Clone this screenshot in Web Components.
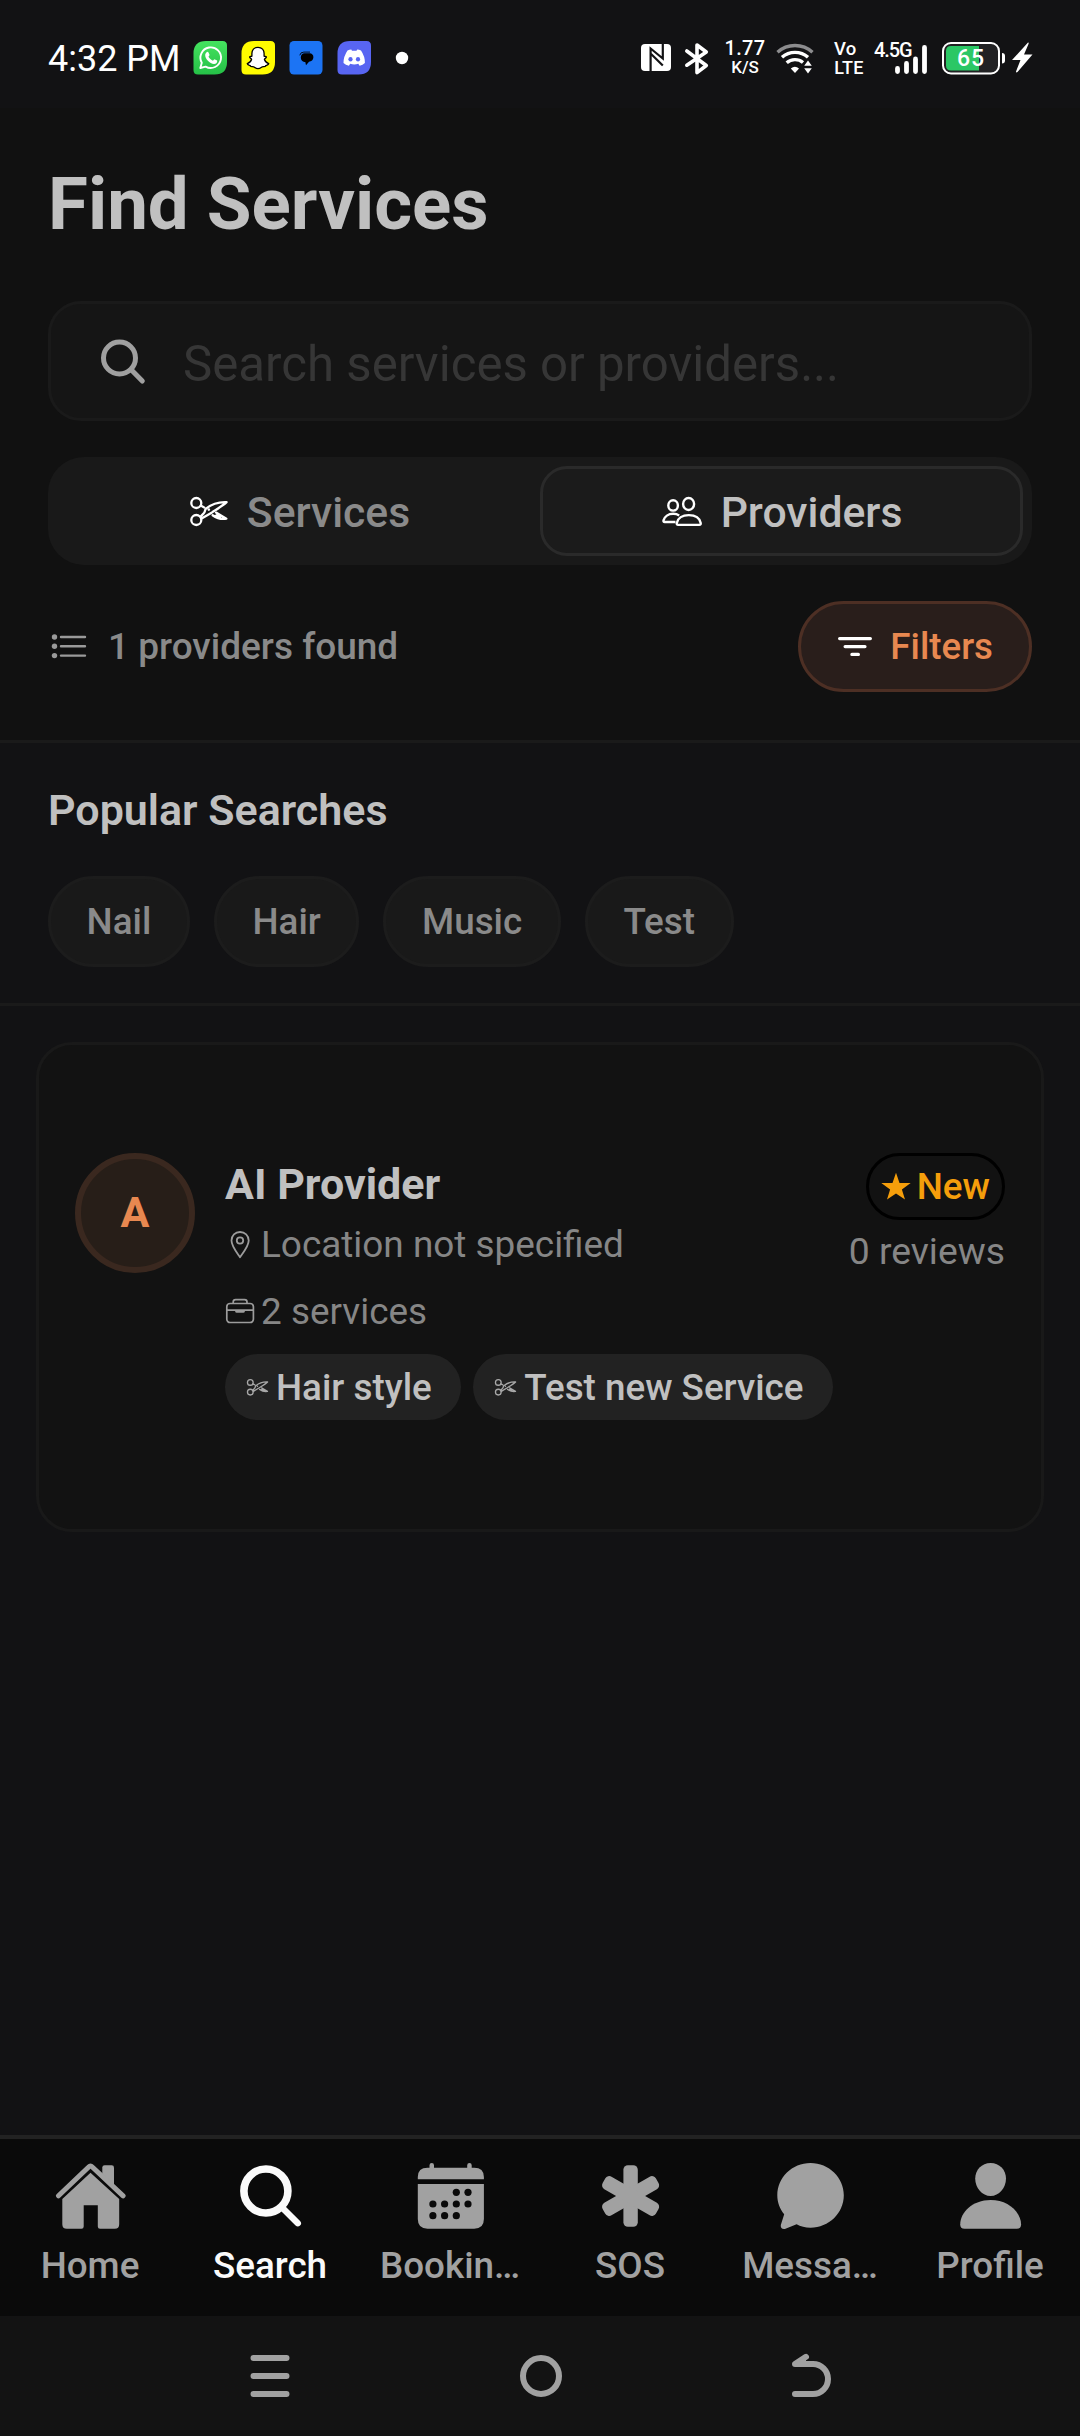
<!DOCTYPE html>
<html lang="en">
<head>
<meta charset="utf-8">
<title>Find Services</title>
<style>
html,body{margin:0;padding:0;background:#121214}
body{width:1080px;height:2436px;overflow:hidden;font-family:Roboto,"Noto Sans",sans-serif;color:#c0c0c0;display:flex;flex-direction:column}
find-screen{flex:1}
</style>
</head>
<body>
<status-bar></status-bar>
<find-screen></find-screen>
<tab-bar>
  <tab-item icon="home">Home</tab-item>
  <tab-item icon="searchTab" active>Search</tab-item>
  <tab-item icon="calendar">Bookin…</tab-item>
  <tab-item icon="sos">SOS</tab-item>
  <tab-item icon="message">Messa…</tab-item>
  <tab-item icon="profile">Profile</tab-item>
</tab-bar>
<system-nav></system-nav>
<script>
const SCISSORS = '<g fill="none" stroke="currentColor" stroke-width="2.3" stroke-linejoin="round" stroke-linecap="round"><circle cx="9.3" cy="13" r="5"/><circle cx="9.3" cy="30" r="5"/><path d="M13.7 15.6 17.2 17.4M13.6 26.6 17 23C18.4 21.5 17.6 20 19 18.7 24 14.7 32 11.8 39.6 12.2 36 15.6 31 18.6 25 22.4L14.6 28.6"/><path d="M29 22.6 39.4 28.7C34 29.6 29.500 28 25.600 25.200M29.500 25.200 33 27"/></g><circle cx="21.800" cy="19.600" r="1.300" fill="currentColor"/>';
const ICONS = {
  scissors: [42,42,SCISSORS],
  people: [42,42,'<g fill="none" stroke="currentColor" stroke-width="2.4" stroke-linejoin="round"><ellipse cx="27.6" cy="14" rx="5.5" ry="6"/><ellipse cx="12.1" cy="15.4" rx="4.8" ry="5.2"/><path d="M17.2 34.9C16 34.9 15.6 34 15.8 32.9 16.8 28.2 21.3 25.1 27.8 25.1S38.7 28.2 39.7 32.9C39.9 34 39.5 34.9 38.3 34.9Z"/><path d="M14.5 32H3.7C2.6 32 2.3 31.3 2.5 30.4 3.5 26.5 7.3 23.8 12.2 23.8 14.7 23.8 16.6 24.4 18.2 25.4"/></g>'],
  list: [42,42,'<g fill="currentColor"><circle cx="6.5" cy="12" r="2.7"/><circle cx="6.5" cy="21.3" r="2.7"/><circle cx="6.5" cy="30.6" r="2.7"/></g><path d="M13 12H37M13 21.3H37M13 30.6H37" stroke="currentColor" stroke-width="2.4" stroke-linecap="round"/>'],
  filter: [36,36,'<path d="M2.6 10.6H33.4M8.1 18.6H28M14.9 26.4H21.4" stroke="currentColor" stroke-width="3.2" stroke-linecap="round"/>'],
  search: [54,54,'<g fill="none" stroke="currentColor" stroke-width="5" stroke-linecap="round"><circle cx="23.5" cy="24" r="16"/><path d="M35.5 36 46.3 47"/></g>'],
  pin: [30,30,'<g fill="none" stroke="currentColor" stroke-width="1.8" stroke-linejoin="round"><path d="M15 27.2C12.5 23.5 6.5 16.5 6.5 10.6 6.5 5.6 10.2 2 15 2S23.7 5.6 23.7 10.6C23.7 16.5 17.5 23.5 15 27.2Z"/><circle cx="15" cy="10.5" r="3.2"/></g>'],
  briefcase: [30,30,'<g fill="none" stroke="currentColor" stroke-width="1.7" stroke-linejoin="round"><rect x="1.8" y="6.5" width="26.6" height="19" rx="3.3"/><path d="M8.2 6.5V5C8.2 3.4 9 2.6 10.6 2.6H19.6C21.2 2.6 22 3.4 22 5V6.5M1.8 13.2H28.4"/></g><path d="M10.2 13.2H19.8V14.2Q19.8 15.7 18.2 15.7H11.8Q10.2 15.7 10.2 14.2Z" fill="currentColor"/>'],
  star: [30,30,'<path d="M15 .8 18.5 11H29.7L20.9 17.4 24 27.6 15 21.5 6 27.6 9.1 17.4 .3 11H11.5Z" fill="currentColor"/>'],
  home: [72,72,'<g fill="currentColor"><path d="M36.5 12.7 65.2 38.9V64.2Q65.2 68.7 60.7 68.7H46Q43.8 68.7 43.8 66.5V45.3H29.7V66.5Q29.7 68.7 27.5 68.7H12.8Q8.3 68.7 8.3 64.2V38.9Z"/><path d="M48.3 14V7.6Q48.3 5.3 50.6 5.3H57.7Q60 5.3 60 7.6V26Z"/></g><path d="M4.5 35.8 34.7 7Q36.5 5.2 38.3 7L69.1 35.8" fill="none" stroke="currentColor" stroke-width="5" stroke-linecap="round"/>'],
  searchTab: [72,72,'<g fill="none" stroke="currentColor" stroke-linecap="round"><circle cx="31.9" cy="31" r="22" stroke-width="7.6"/><path d="M48 47.5 63.8 63.2" stroke-width="6.4"/></g>'],
  calendar: [72,72,'<path fill="currentColor" fill-rule="evenodd" d="M3.8 19.3V17Q3.8 7.7 13.5 7.7H15.5V5.2a2.25 2.25 0 0 1 4.5 0V7.7H53.2V5.2a2.25 2.25 0 0 1 4.5 0V7.7H60.2Q69.9 7.7 69.9 17V19.3ZM3.8 24H69.9V59Q69.9 68.7 60.2 68.7H13.5Q3.8 68.7 3.8 59Z"/><g fill="#0a0a0a"><circle cx="42.3" cy="32.3" r="3.6"/><circle cx="54" cy="32.3" r="3.6"/><circle cx="18.9" cy="44" r="3.6"/><circle cx="30.6" cy="44" r="3.6"/><circle cx="42.3" cy="44" r="3.6"/><circle cx="54" cy="44" r="3.6"/><circle cx="18.9" cy="55.7" r="3.6"/><circle cx="30.6" cy="55.7" r="3.6"/><circle cx="42.3" cy="55.7" r="3.6"/></g>'],
  sos: [72,72,'<g fill="currentColor"><rect x="29.4" y="5.3" width="14.4" height="61.4" rx="4.5"/><rect x="29.4" y="5.3" width="14.4" height="61.4" rx="4.5" transform="rotate(60 36.6 36)"/><rect x="29.4" y="5.3" width="14.4" height="61.4" rx="4.5" transform="rotate(-60 36.6 36)"/></g>'],
  message: [72,72,'<path fill="currentColor" d="M36.5 3C55 3 69.8 17.5 69.8 35.3S55 67.7 36.5 67.7C31.2 67.7 26.5 66.5 22.6 64.3L11.5 68.8C8.6 69.8 6.2 67.8 6.8 65L10.2 54.3C5.8 49 3.3 42.5 3.3 35.3 3.3 17.5 18 3 36.5 3Z"/>'],
  profile: [72,72,'<g fill="currentColor"><path d="M36.6 3C45.5 3 52 10 52 18.5 52 28 45 36 36.6 36S21.2 28 21.2 18.5C21.2 10 27.7 3 36.6 3Z"/><path d="M10.5 68.7Q6.2 68.7 6.2 64.5C6.2 52.5 18.5 40 36.6 40S67.1 52.5 67.1 64.5Q67.1 68.7 62.8 68.7Z"/></g>'],
  menu: [60,60,'<path d="M13.5 12H46.5M13.5 30H46.5M13.5 48H46.5" stroke="currentColor" stroke-width="6" stroke-linecap="round"/>'],
  circle: [60,60,'<circle cx="30" cy="30" r="18" fill="none" stroke="currentColor" stroke-width="6"/>'],
  back: [60,60,'<g fill="none" stroke="currentColor" stroke-width="6" stroke-linecap="round" stroke-linejoin="round"><path d="M14 48H32a15 15 0 0 0 0-30H14L25 10.8"/></g><path d="M14 18 25 10.8V18Z" fill="currentColor"/>'],
  whatsapp: [34,48,'<defs><linearGradient id="w" x1="0" y1="0" x2="0" y2="1"><stop offset="0" stop-color="#45e35f"/><stop offset="1" stop-color="#25c047"/></linearGradient></defs><path d="M13 7H29.5Q34 7 34 11.5V28Q34 40.5 21.5 40.5H5Q.5 40.5.5 36V19.5Q.5 7 13 7Z" fill="url(#w)"/><path d="M7.3 34 8.8 28.8A10.3 10.3 0 1 1 12.6 32.6Z" fill="none" stroke="#fff" stroke-width="1.9" stroke-linejoin="round"/><path d="M13.4 18.4C14.2 17.6 15 17.7 15.5 18.6L16.5 20.8C16.7 21.5 15.8 22.2 15.5 22.8 16.5 24.7 18 25.9 20 26.7 20.6 26.3 21.2 25.1 21.9 25.4L24.2 26.6C24.6 28.5 23 30.1 21 30 16.8 29.5 12 24.9 12.2 21 12.2 20 12.7 19 13.4 18.4Z" fill="#fff"/>'],
  snap: [34,48,'<path d="M13 7H29.5Q34 7 34 11.5V28Q34 40.5 21.5 40.5H5Q.5 40.5.5 36V19.5Q.5 7 13 7Z" fill="#fffc00"/><path d="M17 13.3C21 13.3 23.2 16 23.1 19.8V22.2C24 22.6 25 21.9 25.4 23 25.5 24.1 23.6 24.5 23.4 25.3 24.2 28 25.6 29 27.7 29.7 27.5 31.3 25.3 31.2 24.6 31.8 24.4 33.2 22.6 32.4 21.3 32.8 19.9 33.7 18.8 34.7 17 34.7S14.1 33.7 12.7 32.8C11.4 32.4 9.6 33.2 9.4 31.8 8.7 31.2 6.5 31.3 6.3 29.7 8.4 29 9.8 28 10.6 25.3 10.4 24.5 8.5 24.1 8.6 23 9 21.9 10 22.6 10.9 22.2V19.8C10.8 16 13 13.3 17 13.3Z" fill="#fff" stroke="#000" stroke-width="1.3"/>'],
  chat: [34,48,'<rect x=".5" y="7" width="33" height="33.5" rx="4.5" fill="#1c74f4"/><path d="M15.5 19.3H20.5C23 19.3 24.4 21 24.4 23.2 24.4 25.8 22.3 27.5 20 27.8L17 31.2 16.3 27.9H15.5C13.3 27.9 11.8 25.9 11.8 23.5S13.3 19.3 15.5 19.3Z" fill="#000"/><path d="M10.8 21.3Q11.3 18.1 14.8 18.1H21" fill="none" stroke="#000" stroke-width=".9"/>'],
  discord: [34,48,'<path d="M13 7H29.5Q34 7 34 11.5V28Q34 40.5 21.5 40.5H5Q.5 40.5.5 36V19.5Q.5 7 13 7Z" fill="#5865f2"/><path d="M10.5 16.6Q12.5 15.7 14.3 15.6L15 16.8Q17.2 16.5 19.5 16.8L20.2 15.6Q22 15.7 24 16.6 28 22.5 27.9 29 25.8 31 22.6 31.7L21.3 29.8Q17.2 31 13.2 29.8L11.9 31.7Q8.7 31 6.5 29 6.5 22.5 10.5 16.6Z" fill="#fff"/><ellipse cx="13.5" cy="25.3" rx="2.1" ry="2.3" fill="#5865f2"/><ellipse cx="21" cy="25.3" rx="2.1" ry="2.3" fill="#5865f2"/>'],
  dot: [14,48,'<circle cx="7" cy="24" r="6.2" fill="#fff"/>'],
  nfc: [31,48,'<rect x="1" y="10" width="30" height="27" rx="4" fill="#fff"/><path d="M10.6 37V14.5L22.8 24.5V10M10.6 19.5 22.8 31.5" fill="none" stroke="#121214" stroke-width="2.2"/>'],
  bluetooth: [26,48,'<path d="M2.8 17 22.3 31.5 13 38.6V11L22.3 18 2.8 31.2" fill="none" stroke="#fff" stroke-width="3.6" stroke-linecap="round" stroke-linejoin="round"/>'],
  wifi: [38,48,'<g fill="none" stroke-width="3.4"><path d="M1.5 18.2A26 26 0 0 1 36.5 18.2" stroke="#8c8c8e"/><path d="M6 23.3A19.5 19.5 0 0 1 32 23.3M10.7 28.8A12.5 12.5 0 0 1 27 28.5" stroke="#fff"/></g><path d="M14.8 34.5Q19 31.2 23 34.5L19 39Z" fill="#fff"/><path d="M32 26.5 35.8 31.8H28.2ZM32 39.5 35.8 34.2H28.2Z" fill="#fff"/>'],
  signal: [54,48,'<text x="0" y="23" font-size="20" font-weight="500" fill="#fff" textLength="38.5" font-family="Roboto,sans-serif">4.5G</text><path d="M23.5 34.5V37.5M32.5 29.5V37.5M41.5 25V37.5M50.5 13.5V37.5" stroke="#fff" stroke-width="4.8" stroke-linecap="round"/>'],
  battery: [64,48,'<rect x="1" y="9" width="56" height="30.5" rx="8" fill="#222224" stroke="#fff" stroke-width="2"/><path d="M9 12H37V36.5H9Q4 36.5 4 31.5V17Q4 12 9 12Z" fill="#2bc765"/><path d="M60 19Q63 19 63 22V26.5Q63 29.5 60 29.5Z" fill="#fff"/><text x="15" y="32.3" font-size="23" font-weight="500" fill="#fff" textLength="27" font-family="Roboto,sans-serif">65</text>'],
  bolt: [22,48,'<path d="M17 8.5 1 26H9.5L5 37.5Q5 39 6.5 38L21.5 20.5H13L17.5 10Q18 8 17 8.5Z" fill="#fff"/>']
};

function define(name, html, init) {
  const t = document.createElement('template');
  t.innerHTML = html;
  customElements.define(name, class extends HTMLElement {
    constructor() {
      super();
      this.attachShadow({mode: 'open'}).append(t.content.cloneNode(true));
    }
    connectedCallback() { if (init) init(this, this.shadowRoot); }
  });
}

// Puts the icon named by the host's icon attribute in front of its label.
function leadingIcon(el, root) {
  const icon = document.createElement('ui-icon');
  icon.setAttribute('name', el.getAttribute('icon'));
  root.querySelector('span').before(icon);
}

define('ui-icon', '<style>:host{display:block;flex:none;line-height:0}svg{display:block}</style>', (el, root) => {
  const [w, h, body] = ICONS[el.getAttribute('name')];
  const s = Number(el.getAttribute('scale') || 1);
  const box = document.createElement('template');
  box.innerHTML = `<svg width="${w * s}" height="${h * s}" viewBox="0 0 ${w} ${h}">${body}</svg>`;
  root.append(box.content);
});

define('status-stack', `<style>
:host{display:flex;flex-direction:column;align-items:center;color:#fff;font-weight:500;white-space:nowrap}
</style><slot></slot>`);

define('status-bar', `<style>
:host{display:flex;justify-content:space-between;align-items:flex-start;height:108px;box-sizing:border-box;padding:34px 47px 0 48px;background:#121214;color:#fff}
.side{display:flex;height:48px}
.time{font-size:36px;line-height:51px;width:131px;margin-right:14px;white-space:nowrap}
.apps{display:flex;gap:14px}
.a1{font-size:20px;line-height:20px;padding-top:4px;letter-spacing:.3px}
.a2{font-size:17px;line-height:18px}
.b1{font-size:18.5px;line-height:18px;padding-top:5.5px;align-self:flex-start;letter-spacing:.3px}
.b2{font-size:18px;line-height:19px;letter-spacing:.3px}
</style>
<div class="side"><span class="time">4:32 PM</span><div class="apps"><ui-icon name="whatsapp"></ui-icon><ui-icon name="snap"></ui-icon><ui-icon name="chat"></ui-icon><ui-icon name="discord"></ui-icon></div><ui-icon name="dot" style="margin-left:24px"></ui-icon></div>
<div class="side"><ui-icon name="nfc"></ui-icon><ui-icon name="bluetooth" style="margin-left:13px"></ui-icon>
<status-stack style="width:40px;margin-left:15px"><span class="a1">1.77</span><span class="a2">K/S</span></status-stack>
<ui-icon name="wifi" style="margin-left:11px"></ui-icon>
<status-stack style="width:30px;margin-left:20px"><span class="b1">Vo</span><span class="b2">LTE</span></status-stack>
<ui-icon name="signal" style="margin-left:10px"></ui-icon><ui-icon name="battery" style="margin-left:14px"></ui-icon><ui-icon name="bolt" style="margin-left:5px"></ui-icon></div>`);

define('search-field', `<style>
:host{display:flex;align-items:center;box-sizing:border-box;height:120px;border:3px solid #1a1a1a;border-radius:33px;background:#151515;padding:0 30px 0 45px;color:#a0a0a0}
span{margin-left:33px;font-size:49.2px;line-height:58px;padding-top:5px;color:#363636;white-space:nowrap}
</style><ui-icon name="search"></ui-icon><span><slot></slot></span>`);

define('segment-option', `<style>
:host{display:flex;flex:1;align-items:center;justify-content:center;gap:18px;box-sizing:border-box;border:3px solid transparent;border-radius:27px;color:#8a8a8a;font-size:42.7px;font-weight:500}
:host([active]){background:#1b1b1b;border-color:#2a2a2a;color:#c0c0c0}
ui-icon{color:#fff}
span{line-height:50px;padding-top:1px}
</style><span><slot></slot></span>`, leadingIcon);

define('segment-control', `<style>
:host{display:flex;box-sizing:border-box;height:108px;padding:9px;border-radius:36px;background:#191919}
</style><slot></slot>`);

define('filter-button', `<style>
:host{display:flex;align-items:center;gap:17px;box-sizing:border-box;height:90.6px;padding:0 36px;border:3px solid #4d2f24;border-radius:46px;background:#291e1b;color:#e88850;font-size:36.7px;font-weight:500}
ui-icon{color:#fff}span{line-height:44px;padding-top:1px}
</style><ui-icon name="filter"></ui-icon><span><slot></slot></span>`);

define('search-chip', `<style>
:host{display:block;box-sizing:border-box;height:90.6px;padding:0 35.6px;border:3px solid #1c1c1c;border-radius:46px;background:#191919;color:#8a8a8a;font-size:36.8px;font-weight:500;line-height:86px}
</style><slot></slot>`);

define('service-tag', `<style>
:host{display:flex;align-items:center;gap:7px;box-sizing:border-box;height:66px;padding:0 29px 0 20px;border-radius:33px;background:#222;color:#c0c0c0;font-size:36.8px;font-weight:500;white-space:nowrap}
ui-icon{color:#a8a8a8}span{line-height:44px;padding-top:2px}
</style><ui-icon name="scissors" scale=".571"></ui-icon><span><slot></slot></span>`);

define('meta-line', `<style>
:host{display:flex;align-items:center;gap:6px;height:44px;color:#868686;font-size:36.9px;line-height:44px}
::slotted(ui-icon){color:#9c9c9c}
</style><slot name="icon"></slot><span><slot></slot></span>`);

define('provider-card', `<style>
:host{display:flex;align-items:flex-start;box-sizing:border-box;height:490px;margin:36px 36px 0;padding:108px 36px 0;border:3px solid #191919;border-radius:36px;background:#121212}
.avatar{box-sizing:border-box;flex:none;width:120px;height:120px;border-radius:50%;border:6px solid #3a281f;background:#271e18;color:#e88850;font-size:43px;font-weight:700;line-height:106px;text-align:center}
.info{flex:1;display:flex;flex-direction:column;margin-left:30px}
.name{font-size:43px;line-height:50px;font-weight:700;margin:6px 0 13.5px}
.tags{display:flex;gap:12.5px;margin-top:20px}
.right{display:flex;flex-direction:column;align-items:flex-end;margin-left:-200px}
.badge{display:flex;align-items:center;gap:6px;box-sizing:border-box;height:67px;padding:0 12px;border:3px solid #000;border-radius:34px;color:#f59e0b;font-size:36.9px;line-height:44px;font-weight:500}
.reviews{font-size:37.3px;line-height:44px;margin-top:9px;color:#868686}
</style>
<div class="avatar">A</div>
<div class="info"><div class="name"><slot name="name"></slot></div>
<meta-line><ui-icon slot="icon" name="pin"></ui-icon>Location not specified</meta-line>
<meta-line style="margin-top:23px"><ui-icon slot="icon" name="briefcase"></ui-icon>2 services</meta-line>
<div class="tags"><service-tag>Hair style</service-tag><service-tag>Test new Service</service-tag></div></div>
<div class="right"><div class="badge"><ui-icon name="star"></ui-icon><span>New</span></div><div class="reviews">0 reviews</div></div>`);

define('find-screen', `<style>
:host{display:block}
header{box-sizing:border-box;height:635px;padding:55px 48px 0;background:#111;border-bottom:3px solid #1a1a1a;display:flex;flex-direction:column}
h1{margin:0 0 54px;font-size:72.7px;line-height:84px;font-weight:700}
segment-control{margin:36px 0}
.row{display:flex;justify-content:space-between;align-items:center}
.found{display:flex;align-items:center;gap:18px;font-size:37px;font-weight:500;color:#8a8a8a}
.found ui-icon{color:#9a9a9a}.found span{line-height:44px;padding-top:1px}
section{box-sizing:border-box;height:263px;padding:42px 48px 0;border-bottom:3px solid #1a1a1a}
h2{margin:0 0 41px;font-size:43px;line-height:50px;font-weight:600}
.chips{display:flex;gap:24px}
</style>
<header><h1>Find Services</h1><search-field>Search services or providers...</search-field>
<segment-control><segment-option icon="scissors">Services</segment-option><segment-option icon="people" active>Providers</segment-option></segment-control>
<div class="row"><div class="found"><ui-icon name="list"></ui-icon><span>1 providers found</span></div><filter-button>Filters</filter-button></div></header>
<section><h2>Popular Searches</h2><div class="chips"><search-chip>Nail</search-chip><search-chip>Hair</search-chip><search-chip>Music</search-chip><search-chip>Test</search-chip></div></section>
<provider-card><span slot="name">AI Provider</span></provider-card>`);

define('tab-item', `<style>
:host{display:flex;flex:1 1 0;min-width:0;flex-direction:column;align-items:center;color:#a1a1a1;font-size:36.8px;font-weight:500}
:host([active]){color:#fafafa}
span{margin-top:12px;line-height:44px;white-space:nowrap}
</style><span><slot></slot></span>`, leadingIcon);

define('tab-bar', `<style>
:host{display:flex;box-sizing:border-box;height:181px;padding-top:21px;border-top:4px solid #222;background:#0a0a0a}
</style><slot></slot>`);

define('system-nav', `<style>
:host{display:flex;box-sizing:border-box;height:120px;padding:30px 239px 0 240px;justify-content:space-between;background:#131313;color:#a1a1a1}
</style><ui-icon name="menu"></ui-icon><ui-icon name="circle"></ui-icon><ui-icon name="back"></ui-icon>`);
</script>
</body>
</html>
